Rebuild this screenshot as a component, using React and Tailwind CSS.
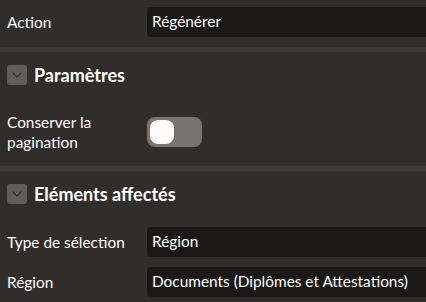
import { useState } from 'react'

const font = { fontFamily: '"Segoe UI", Lato, "Noto Sans", sans-serif' }

function Chevron() {
  return (
    <svg width="10" height="6" viewBox="0 0 10 6" fill="none">
      <path d="M1 1l4 4 4-4" stroke="#34302d" strokeWidth="1.2" strokeLinecap="round" strokeLinejoin="round" />
    </svg>
  )
}

function Header({ title }) {
  return (
    <div className="flex items-center gap-[7px] px-[7px] py-[13px]">
      <div className="flex h-5 w-5 items-center justify-center rounded-[3px] bg-[#625d58]">
        <Chevron />
      </div>
      <h2 className="text-[18px] font-bold leading-5 text-white">{title}</h2>
    </div>
  )
}

function Field({ label, value }) {
  return (
    <div className="flex items-center py-[5px] pl-[7px]">
      <label className="w-[140px] shrink-0 text-[15.4px] leading-5 text-white">{label}</label>
      <div className="flex h-[30px] flex-1 items-center rounded-l-[4px] bg-[#1b1917] pl-[5px] text-[15.4px] text-white">
        {value}
      </div>
    </div>
  )
}

export default function App() {
  const [keepPaging, setKeepPaging] = useState(false)

  return (
    <div className="h-[302px] w-[426px] overflow-hidden bg-[#312d2a]" style={font}>
      <div className="pt-[2px] pb-[5px]">
        <Field label="Action" value="Régénérer" />
      </div>

      <div className="h-[5px] bg-[#3e3a37]" />
      <Header title="Paramètres" />
      <div className="pt-[9px] pb-[9px]">
        <div className="flex items-center py-[5px] pl-[7px]">
          <label className="w-[140px] shrink-0 text-[15.4px] leading-5 text-white">
            Conserver la
            <br />
            pagination
          </label>
          <button
            onClick={() => setKeepPaging(!keepPaging)}
            className="flex h-[30px] w-[55px] items-center rounded-lg bg-[#78736e] px-[3px]"
          >
            <span className="h-6 w-6 rounded-lg bg-[#fcfbfa]" />
          </button>
        </div>
      </div>

      <div className="h-[5px] bg-[#3e3a37]" />
      <Header title="Eléments affectés" />
      <div className="pt-[5px]">
        <Field label="Type de sélection" value="Région" />
        <Field label="Région" value="Documents (Diplômes et Attestations)" />
      </div>
    </div>
  )
}
